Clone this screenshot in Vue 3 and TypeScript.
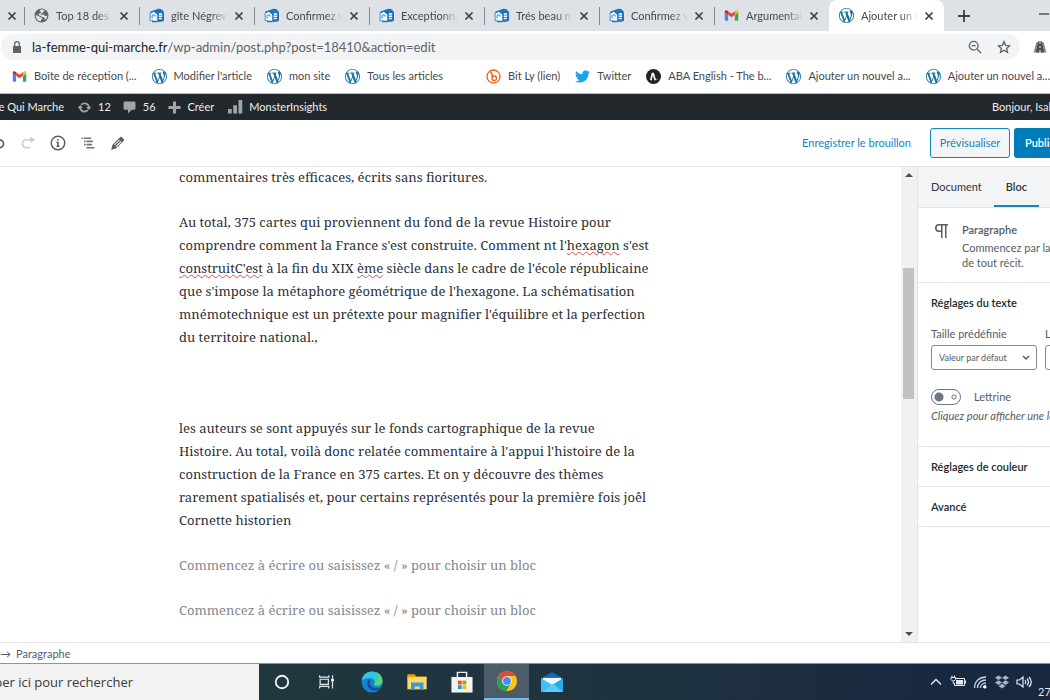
<script setup lang="ts">
import { ref } from 'vue'

interface Tab { icon: string; title: string; active?: boolean }
interface Bookmark { icon: string; label: string; gap?: boolean }

const tabs: Tab[] = [
  { icon: 'globe', title: 'Top 18 des l' },
  { icon: 'gite', title: 'gîte Négrev' },
  { icon: 'gite', title: 'Confirmez v' },
  { icon: 'gite', title: 'Exceptionne' },
  { icon: 'gite', title: 'Trés beau m' },
  { icon: 'gite', title: 'Confirmez v' },
  { icon: 'gmail', title: 'Argumentai' },
  { icon: 'wp', title: 'Ajouter un n', active: true },
]

const bookmarks: Bookmark[] = [
  { icon: 'gmail', label: 'Boîte de réception (...' },
  { icon: 'wp', label: "Modifier l'article" },
  { icon: 'wp', label: 'mon site' },
  { icon: 'wp', label: 'Tous les articles' },
  { icon: 'bitly', label: 'Bit Ly (lien)', gap: true },
  { icon: 'twitter', label: 'Twitter' },
  { icon: 'aba', label: 'ABA English - The b...' },
  { icon: 'wp', label: 'Ajouter un nouvel a...' },
  { icon: 'wp', label: 'Ajouter un nouvel a...' },
]

const apps = [
  { icon: 'cortana', name: 'Cortana' },
  { icon: 'taskview', name: 'Affichage des tâches' },
  { icon: 'edge', name: 'Edge' },
  { icon: 'folder', name: 'Explorateur' },
  { icon: 'store', name: 'Store' },
  { icon: 'chrome', name: 'Chrome' },
  { icon: 'mail', name: 'Courrier' },
]

const urlPath = ref('/wp-admin/post.php?post=18410&action=edit')
const query = ref('')
const dropCap = ref(false)
const fontSize = ref('default')
</script>

<template>
  <div class="screen">
    <svg class="defs" aria-hidden="true">
      <symbol id="wp" viewBox="0 0 20 20">
        <circle cx="10" cy="10" r="9.6" fill="#fff" />
        <path fill="#1673a0" d="M20 10c0-5.51-4.49-10-10-10C4.48 0 0 4.49 0 10c0 5.52 4.48 10 10 10 5.51 0 10-4.48 10-10zM7.78 15.37L4.37 6.22c.55-.02 1.17-.08 1.17-.08.5-.06.44-1.13-.06-1.11 0 0-1.45.11-2.37.11-.18 0-.37 0-.58-.01C4.12 2.69 6.87 1.11 10 1.11c2.33 0 4.45.87 6.05 2.34-.68-.11-1.65.39-1.65 1.58 0 .74.45 1.36.9 2.1.35.61.55 1.36.55 2.46 0 1.49-1.4 5-1.4 5l-3.03-8.37c.54-.02.82-.17.82-.17.5-.05.44-1.25-.06-1.22 0 0-1.44.12-2.38.12-.87 0-2.33-.12-2.33-.12-.5-.03-.56 1.2-.06 1.22l.92.08 1.26 3.41zM17.41 10c.24-.64.74-1.87.43-4.25.7 1.29 1.05 2.71 1.05 4.25 0 3.29-1.73 6.24-4.4 7.78.97-2.59 1.94-5.2 2.92-7.78zM6.1 18.09C3.12 16.65 1.11 13.53 1.11 10c0-1.3.23-2.48.72-3.59C3.25 10.3 4.67 14.2 6.1 18.09zm4.03-6.63l2.58 6.98c-.86.29-1.76.45-2.71.45-.79 0-1.57-.11-2.29-.33.81-2.38 1.62-4.74 2.42-7.1z" />
      </symbol>
      <symbol id="globe" viewBox="0 0 20 20">
        <circle cx="10" cy="10" r="9.3" fill="#5f6368" />
        <path fill="#dee1e6" d="M2.2 9.8c2.6.2 4.4 1 5.6 2.2 1 .9 2.800.4 3.200 1.400.4 1.200-1.200 1.600-1.600 2.800-.2.8-.4 1.400-1.200 1.600C4.800 17 2 13.800 2.200 9.800zM8.500 2.300c2.500-.6 4.500.2 6 1.400-.6.8-1.700.7-2.300 1.300-.5.6.1 1.500-.8 1.900-1 .5-1.900-.1-2.600.6-.6.7.3 1.300 1.300 1.300 1.300 0 2.300-.4 3.300.5.9.8 1.700 1.300 2.900 1.200.6 0 1-.2 1.500-.4-.2 2.400-1.300 4.300-3 5.700-1-.8-.4-2.200-1.200-3-.9-.8-2.300-.5-3.300-1.200-1.100-.7-1.900-1.600-3.100-1.700-.8-.1-1.100-.8-.8-1.500.5-1.500 2.600-1.200 2.900-2.600.2-1-1.100-1.400-2-1.800.4-.9.8-1.400 1.200-1.700z" />
      </symbol>
      <symbol id="gite" viewBox="0 0 20 20">
        <path fill="#f2f8fc" d="M1 8 7 4l5 4v10H2z" />
        <path fill="#1b74bd" d="M2 4.500 12.500 1c4-.2 6.500 1.500 7.500 5V17c-2.500 1.300-6 1.800-9 1.500V9L6.500 5 .5 8z" />
        <path fill="none" stroke="#4c9dd4" stroke-width="1.500" d="M1.500 8v9h4M5 13.500a2.300 2.300 0 1 1 3.500-2" />
        <path stroke="#fff" stroke-width="1.700" d="M13 8h4.500M13 11h4.500M13 14h4" />
        <path stroke="#1b74bd" stroke-width="2" d="M4 18h7" />
      </symbol>
      <symbol id="gmail" viewBox="0 0 20 20">
        <path fill="#4285f4" d="M1 5.500 5.500 9v8H2.500C1.700 17 1 16.300 1 15.500z" />
        <path fill="#34a853" d="M14.500 9 19 5.500v10c0 .8-.7 1.500-1.500 1.500h-3z" />
        <path fill="#c5221f" d="M1 5c0-2 2-2.500 3.500-1.500l1 .8V9L1 5.700z" />
        <path fill="#fbbc04" d="m14.500 4.300 1-.8C17 2.500 19 3 19 5v.7L14.500 9z" />
        <path fill="#ea4335" d="M5.500 4.300 10 7.700l4.500-3.400V9L10 12.400 5.500 9z" />
      </symbol>
      <symbol id="bitly" viewBox="0 0 20 20">
        <circle cx="10" cy="10" r="8.700" fill="#fff" stroke="#ee6123" stroke-width="1.800" />
        <path fill="none" stroke="#ee6123" stroke-width="2" d="M5.500 4.500c2 .3 2.800 1.500 2.800 4v6.200M8.300 10.500c2-2.300 5.700-1.300 5.700 1.800 0 2.700-3 4.200-5.700 2.300" />
      </symbol>
      <symbol id="twitter" viewBox="0 0 24 24">
        <path fill="#1da1f2" d="M23.953 4.57a10 10 0 01-2.825.775 4.958 4.958 0 002.163-2.723c-.951.555-2.005.959-3.127 1.184a4.92 4.92 0 00-8.384 4.482C7.69 8.095 4.067 6.13 1.64 3.162a4.822 4.822 0 00-.666 2.475c0 1.71.87 3.213 2.188 4.096a4.904 4.904 0 01-2.228-.616v.06a4.923 4.923 0 003.946 4.827 4.996 4.996 0 01-2.212.085 4.936 4.936 0 004.604 3.417 9.867 9.867 0 01-6.102 2.105c-.39 0-.779-.023-1.17-.067a13.995 13.995 0 007.557 2.209c9.053 0 13.998-7.496 13.998-13.985 0-.21 0-.42-.015-.63A9.935 9.935 0 0024 4.59z" />
      </symbol>
      <symbol id="aba" viewBox="0 0 20 20">
        <circle cx="10" cy="10" r="10" fill="#1c2529" />
        <path fill="none" stroke="#fff" stroke-width="2.200" d="M6.500 15 8.500 6h1.200l2.600 9" />
        <circle cx="14.800" cy="14" r="1.100" fill="#2bb5c9" />
      </symbol>
      <symbol id="close" viewBox="0 0 10 10">
        <path stroke="#3c4043" stroke-width="1.700" d="m1.500 1.500 7 7m0-7-7 7" />
      </symbol>
      <symbol id="cortana" viewBox="0 0 24 24">
        <circle cx="12" cy="12" r="6.800" fill="none" stroke="#f1f4f5" stroke-width="2" />
      </symbol>
      <symbol id="taskview" viewBox="0 0 24 24">
        <path fill="none" stroke="#e4e9ea" stroke-width="1.300" d="M4 4.500v2.200h10V4.500M4.500 9h9v5.500h-9zM4 19v-2.300h10V19M18 4.500v4M18 12v7" />
        <path fill="#fff" d="M16.500 8.500h3v3h-3z" />
      </symbol>
      <symbol id="edge" viewBox="0 0 24 24">
        <circle cx="12" cy="12" r="11.500" fill="#1382cf" />
        <path fill="#36c3e0" d="M.8 10C2 4 6.500.5 12 .5c6.500 0 11.400 4.500 11.400 10.300 0 3.200-2.900 5.200-5.900 5.200-2 0-3.300-.7-3.300-1.600 0-.8 1-1 1-2.500C15.200 9.500 12 7.800 9 7.800c-4 0-7 1.400-8.200 2.200z" />
        <path fill="#5bd46c" d="M16 1.200c4.500 1.500 7.400 5.200 7.400 9.600 0 3.200-2.900 5.200-5.900 5.200-2 0-3.300-.7-3.300-1.600 0-.8 1-1 1-2.500 5-1.900 5.100-6.900.8-10.700z" />
        <path fill="#164c94" d="M8.500 9.500c-3 3-1.500 9.500 4 11.500 3.500 1 7-.5 8.700-3-5 2-11.700.3-11.700-5.500 0-1.200.4-2.200 1.200-3z" />
      </symbol>
      <symbol id="folder" viewBox="0 0 24 24">
        <path fill="#e5a00d" d="M1.500 3.500h8L11 6h11.500v3h-21z" />
        <path fill="#fdd663" d="M1.500 6.500h21V20h-21z" />
        <path fill="#3d97dc" d="M5.500 20.500v-8h13.500v8h-4V17h-5.500v3.500z" />
      </symbol>
      <symbol id="store" viewBox="0 0 24 24">
        <path fill="none" stroke="#eee" stroke-width="1.600" d="M7 7V1.500h10V7" />
        <path fill="#f3f3f3" d="M.5 6.500h23v17H.5z" />
        <path fill="#f25022" d="M7.500 10.500h4.200v4.200H7.500z" /><path fill="#7fba00" d="M12.500 10.500h4.200v4.200h-4.200z" />
        <path fill="#00a4ef" d="M7.500 15.500h4.200v4.200H7.500z" /><path fill="#ffb900" d="M12.500 15.500h4.200v4.200h-4.200z" />
      </symbol>
      <symbol id="chrome" viewBox="0 0 24 24">
        <circle cx="12" cy="12" r="11" fill="#fbc116" />
        <path fill="#dd4b3e" d="M2.500 6.500A11 11 0 0 1 21.500 6.600H12L7.400 14.700z" />
        <path fill="#1da462" d="M2.500 6.500 7.500 14.600 12 17.200l3.500-1.500L11.200 23A11 11 0 0 1 2.500 6.500z" />
        <circle cx="12" cy="12" r="5.300" fill="#f7f9fa" /><circle cx="12" cy="12" r="4.300" fill="#4c8bf5" />
      </symbol>
      <symbol id="mail" viewBox="0 0 24 24">
        <path fill="#1167b4" d="M0 8 12 1l12 7v3H0z" />
        <path fill="#f4f8fb" d="M2 7.500h20v9H2z" />
        <path fill="#42c0f3" d="M0 8 12 15 0 23z" /><path fill="#29a9e8" d="M24 8v15H0z" />
        <path fill="#56cdf8" d="M0 23 13 14l11 9z" />
      </symbol>
    </svg>

    <nav class="tabstrip" aria-label="Onglets">
      <div class="tab stub"><button class="x" aria-label="Fermer"><svg><use href="#close" /></svg></button></div>
      <div v-for="(tab, i) in tabs" :key="i" class="tab" :class="{ active: tab.active }">
        <svg class="fav"><use :href="'#' + tab.icon" /></svg>
        <span class="title">{{ tab.title }}</span>
        <button class="x" aria-label="Fermer"><svg><use href="#close" /></svg></button>
      </div>
      <button class="newtab" aria-label="Nouvel onglet"><svg viewBox="0 0 12 12"><path stroke="#3c4043" stroke-width="1.800" d="M6 0v12M0 6h12" /></svg></button>
      <button class="minimize" aria-label="Réduire"><svg viewBox="0 0 10 10"><path stroke="#333" stroke-width="1.200" d="M0 5h10" /></svg></button>
    </nav>

    <div class="toolbar">
      <label class="omnibox">
        <svg class="lock" viewBox="0 0 10 12"><path fill="#5f6368" d="M1 5h8v7H1z" /><path fill="none" stroke="#5f6368" stroke-width="1.300" d="M2.700 5V3a2.300 2.300 0 0 1 4.600 0v2" /></svg>
        <span class="host">la-femme-qui-marche.fr</span>
        <input v-model="urlPath" class="path" type="text" aria-label="Adresse" spellcheck="false" />
        <svg class="tool" viewBox="0 0 14 14"><g fill="none" stroke="#5f6368" stroke-width="1.300"><circle cx="5.700" cy="5.700" r="4.400" /><path d="m9 9 4 4M3.700 5.700h4" /></g></svg>
        <svg class="tool star" viewBox="0 0 14 14"><path fill="none" stroke="#5f6368" stroke-width="1.300" d="m7 1.600 1.600 3.700 4 .4-3 2.700.9 4L7 10.300l-3.500 2.100.9-4-3-2.700 4-.4z" /></svg>
      </label>
      <svg class="road" viewBox="0 0 14 12"><path fill="#8a8d90" d="M3.500 1h2v10.500H.5zM10.500 1h-2v10.500h5z" /><path fill="#4d5053" d="M5 .5h4l2 11H3z" /><path stroke="#e4e4e4" d="M7 1v2M7 5v2M7 9v2.500" /></svg>
    </div>

    <nav class="bookmarks" aria-label="Favoris">
      <a v-for="(b, i) in bookmarks" :key="i" href="#" :class="{ gap: b.gap }">
        <svg><use :href="'#' + b.icon" /></svg><span>{{ b.label }}</span>
      </a>
    </nav>

    <nav class="adminbar" aria-label="Administration">
      <a href="#" class="site">La Femme Qui Marche</a>
      <a href="#" class="count"><svg viewBox="0 0 20 20"><path d="M10.200 3.280c3.530 0 6.430 2.610 6.920 6h2.080l-3.500 4-3.500-4h2.320c-.45-1.970-2.210-3.450-4.320-3.450-1.450 0-2.730.71-3.540 1.780L4.950 5.660C6.230 4.200 8.110 3.280 10.200 3.280zm-.4 13.440c-3.520 0-6.430-2.610-6.920-6H.8l3.500-4c1.170 1.330 2.330 2.670 3.500 4H5.480c.45 1.970 2.210 3.450 4.320 3.450 1.450 0 2.730-.71 3.540-1.780l1.710 1.950c-1.280 1.460-3.150 2.380-5.250 2.380z" /></svg>12</a>
      <a href="#" class="comments"><svg viewBox="0 0 20 20"><path d="M4 2h12c1 0 2 .9 2 2v7c0 1.100-1 2-2 2h-3l-5 5v-5H4c-1.100 0-2-.9-2-2V4c0-1.100.9-2 2-2z" /></svg>56</a>
      <a href="#" class="create"><svg viewBox="0 0 20 20"><path d="M8 2h4v6h6v4h-6v6H8v-6H2V8h6z" /></svg>Créer</a>
      <a href="#" class="insights"><svg viewBox="0 0 20 20"><path d="M0 12h5v6H0zM7 7h5v11H7zM14 0h5v18h-5z" /></svg>MonsterInsights</a>
      <a href="#" class="hello">Bonjour, Isabelle</a>
    </nav>

    <header class="edithead">
      <button class="tb undo" aria-label="Annuler"><svg viewBox="0 0 20 20"><path fill="#555d66" d="M12 5H7V2L1 6l6 4V7h5c2.200 0 4 1.800 4 4s-1.800 4-4 4H7v2h5c3.300 0 6-2.700 6-6s-2.700-6-6-6z" /></svg></button>
      <button class="tb" aria-label="Rétablir"><svg viewBox="0 0 20 20"><path fill="#c9ccd0" d="M8 5h5V2l6 4-6 4V7H8c-2.200 0-4 1.800-4 4s1.800 4 4 4h5v2H8c-3.300 0-6-2.700-6-6s2.700-6 6-6z" /></svg></button>
      <button class="tb" aria-label="Informations"><svg viewBox="0 0 20 20"><circle cx="10" cy="10" r="8.500" fill="none" stroke="#555d66" stroke-width="1.800" /><path fill="#555d66" d="M9 5h2v2H9zM8 8.500h3v5h1V15H8v-1.500h1V10H8z" /></svg></button>
      <button class="tb" aria-label="Navigation"><svg viewBox="0 0 20 20"><path fill="#6c737b" d="M2 3h2v2H2zM5 3h9v2H5zM5 7h2v2H5zM8 7h8v2H8zM5 11h2v2H5zM8 11h7v2H8zM8 15h10v2H8z" /></svg></button>
      <button class="tb" aria-label="Modifier"><svg viewBox="0 0 20 20"><path fill="#555d66" d="M14.500 2.500 17.500 5.500c.5.5.5 1 0 1.500L7.500 17 1.500 18.500 3 12.500 13 2.500c.5-.5 1-.5 1.500 0zM11.500 5.800 5.200 12.100l.8.800 6.400-6.300zM8 14.900l6.300-6.400-.9-.9L7.100 14z" /></svg></button>
      <button class="draft">Enregistrer le brouillon</button>
      <button class="preview">Prévisualiser</button>
      <button class="publish">Publier</button>
    </header>

    <div class="work">
      <main class="canvas">
        <p>commentaires très efficaces, écrits sans fioritures.</p>
        <p>
          Au total, 375 cartes qui proviennent du fond de la revue Histoire pour<br />
          comprendre comment la France s'est construite. Comment nt l'<u>hexagon</u> s'est<br />
          <u>construitC'est</u> à la fin du XIX <u>ème</u> siècle dans le cadre de l'école républicaine<br />
          que s'impose la métaphore géométrique de l'hexagone. La schématisation<br />
          mnémotechnique est un prétexte pour magnifier l'équilibre et la perfection<br />
          du territoire national.,
        </p>
        <p class="blank"></p>
        <p>
          les auteurs se sont appuyés sur le fonds cartographique de la revue<br />
          Histoire. Au total, voilà donc relatée commentaire à l'appui l'histoire de la<br />
          construction de la France en 375 cartes. Et on y découvre des thèmes<br />
          rarement spatialisés et, pour certains représentés pour la première fois joêl<br />
          Cornette historien
        </p>
        <p class="hint">Commencez à écrire ou saisissez « / » pour choisir un bloc</p>
        <p class="hint">Commencez à écrire ou saisissez « / » pour choisir un bloc</p>
      </main>

      <div class="scroll" aria-hidden="true">
        <svg viewBox="0 0 8 4"><path fill="#505050" d="M0 4 4 0l4 4z" /></svg>
        <div class="track"><i class="before"></i><i class="thumb"></i><i class="after"></i></div>
        <svg viewBox="0 0 8 4"><path fill="#505050" d="m0 0 4 4 4-4z" /></svg>
      </div>

      <aside class="side">
        <div class="sidetabs"><button>Document</button><button class="on">Bloc</button></div>
        <section class="card">
          <svg viewBox="0 0 14 16"><path fill="#555d66" d="M5 1h9v1.600h-1.500V15H11V2.600H8.500V15H7V9H5A4 4 0 0 1 5 1zM5 2.600a2.400 2.400 0 0 0 0 4.800h2V2.600z" /></svg>
          <div><h2>Paragraphe</h2><p>Commencez par la base<br />de tout récit.</p></div>
        </section>
        <section class="text">
          <h3>Réglages du texte</h3>
          <div class="fields">
            <div class="field">
              <label for="preset">Taille prédéfinie</label>
              <span class="pick">
                <select id="preset" v-model="fontSize"><option value="default">Valeur par défaut</option></select>
                <svg viewBox="0 0 8 6"><path fill="none" stroke="#555d66" stroke-width="1.500" d="m1 1 3 3 3-3" /></svg>
              </span>
            </div>
            <div class="field">
              <label for="custom">La taille</label>
              <input id="custom" type="text" />
            </div>
          </div>
          <div class="toggle">
            <input id="cap" v-model="dropCap" type="checkbox" />
            <label for="cap">Lettrine</label>
          </div>
          <p class="help">Cliquez pour afficher une lettrine</p>
        </section>
        <button class="panel">Réglages de couleur</button>
        <button class="panel">Avancé</button>
      </aside>
    </div>

    <footer class="crumbs"><span class="arrow">→</span><button>Paragraphe</button></footer>

    <div class="taskbar">
      <div class="find"><input v-model="query" type="text" placeholder="Taper ici pour rechercher" aria-label="Rechercher" /></div>
      <button v-for="a in apps" :key="a.icon" class="app" :class="{ open: a.icon === 'chrome' }" :aria-label="a.name"><svg><use :href="'#' + a.icon" /></svg></button>
      <div class="tray">
        <svg viewBox="0 0 16 16"><path fill="none" stroke="#e6eaf0" stroke-width="1.400" d="m3 10.500 5-5 5 5" /></svg>
        <svg viewBox="0 0 16 16"><path fill="none" stroke="#e6eaf0" d="M6 4.500h8.500v7H4.500v-2M2 1.500v2M4.500 1.500v2M1 3.500h4.500v2L4 7H2.500L1 5.500zM3.300 7v2.500H5" /><path fill="#e6eaf0" d="M6 6h7v4.500H6zM14.500 6.500H16v3h-1.500z" /></svg>
        <svg viewBox="0 0 16 16"><path fill="none" stroke="#ccd3dc" stroke-width="1.300" d="M2.500 14C2.500 7.500 7.500 3 14 3M5.500 14C5.500 9.500 9 6 14 6M8.500 14c0-3 2.500-5 5.500-5M11.500 14c0-1.500 1-2.500 2.500-2.500" /><circle cx="13" cy="13" r="1.500" fill="#fff" /></svg>
        <svg viewBox="0 0 16 16"><path fill="#a9b3c1" d="m4.500 1.500 3.500 2.300-3.500 2.300L1 3.800zm7 0L15 3.800l-3.500 2.300L8 3.800zm-7 4.800L8 8.600l-3.500 2.300L1 8.600zm7 0L15 8.600l-3.500 2.300L8 8.600zM8 9.800l3.500 2.300L8 14.400l-3.500-2.300z" /></svg>
        <svg viewBox="0 0 16 16"><path fill="none" stroke="#e6eaf0" stroke-width="1.200" d="M1 6h2.500L7 3v10l-3.500-3H1zM9 6q1.500 2 0 4M11 4.500q3 3.500 0 7M13 3q4.500 5 0 10" /></svg>
        <span class="date">27/11</span>
      </div>
    </div>
  </div>
</template>

<style>
body { margin: 0; overflow: hidden; }
#app { height: 100vh; }
</style>

<style scoped>
.screen { height: 100%; display: flex; flex-direction: column; overflow: hidden; background: #fff; color: #32373c; font: 11px/16px Lato, "Open Sans", sans-serif; white-space: nowrap; }
.defs { display: none; }
button, input, select { font: inherit; color: inherit; border: 0; padding: 0; margin: 0; background: none; min-width: 0; border-radius: 0; }
a { color: inherit; text-decoration: none; }
svg { display: block; flex: none; }
p, h2, h3 { margin: 0; font-weight: 400; font-size: inherit; }

.tabstrip { flex: none; height: 31px; display: flex; background: #dee1e6; color: #45494d; }
.tab { flex: none; width: 115px; box-sizing: border-box; display: flex; align-items: center; padding: 0 10px 0 9px; border-left: 1px solid transparent; background: linear-gradient(#85898e, #85898e) 0 7px / 1px 18px no-repeat; background-origin: border-box; }
.tab.stub { width: 24px; background: none; padding: 0 9px 0 0; justify-content: flex-end; }
.tab.active { background: #fff; border-radius: 8px 8px 0 0; }
.fav { width: 15px; height: 15px; margin-right: 7px; }
.title { flex: 1; overflow: hidden; mask-image: linear-gradient(90deg, #000 70%, transparent); }
.x { margin-left: 6px; width: 10px; height: 10px; }
.x svg { width: 10px; height: 10px; }
.newtab { margin-left: 14px; }
.newtab svg { width: 12px; height: 12px; }
.minimize { margin-left: auto; margin-bottom: 4px; }
.minimize svg { width: 12px; height: 10px; }

.toolbar { flex: none; height: 32px; display: flex; align-items: center; padding-left: 1px; }
.omnibox { flex: 1; height: 26px; display: flex; align-items: center; background: #f1f3f4; border-radius: 13px; padding: 0 9px 0 11px; font-size: 13px; }
.lock { width: 10px; height: 12px; margin-right: 10px; }
.host { color: #202124; }
.path { flex: 1; color: #5f6368; outline: 0; }
.tool { width: 14px; height: 14px; }
.star { margin-left: 15px; }
.road { width: 14px; height: 12px; margin: 0 3px 0 13px; }

.bookmarks { flex: none; height: 31px; box-sizing: border-box; display: flex; align-items: center; padding: 0 0 4px 12px; border-bottom: 1px solid #b9bbbd; color: #45494d; gap: 15px; overflow: hidden; }
.bookmarks a { display: flex; align-items: center; gap: 7px; }
.bookmarks .gap { margin-left: 28px; }
.bookmarks svg { width: 15px; height: 15px; }

.adminbar { flex: none; height: 26px; box-sizing: border-box; display: flex; align-items: center; background: #23282d; color: #eee; }
.adminbar a { display: flex; align-items: center; gap: 6px; }
.adminbar svg { width: 15px; height: 15px; fill: #a0a5aa; }
.adminbar .site { width: 64px; justify-content: flex-end; margin-right: 13px; }
.count { margin-right: 11px; }
.comments { margin-right: 11px; }
.create { margin-right: 14px; }
.adminbar .hello { margin-left: auto; width: 58px; overflow: hidden; }

.edithead { flex: none; height: 47px; box-sizing: border-box; display: flex; align-items: center; border-bottom: 1px solid #e2e4e7; overflow: hidden; }
.tb { flex: none; width: 30px; display: flex; justify-content: center; }
.tb svg { width: 16px; height: 16px; }
.undo { margin-left: -17px; }
.draft { margin-left: auto; color: #1485bd; padding: 0 19px; }
.preview { flex: none; width: 80px; height: 30px; border: 1px solid #1485bd; border-radius: 3px; background: #f3f5f6; color: #1485bd; }
.publish { flex: none; width: 36px; height: 30px; margin-left: 4px; padding-left: 11px; background: #007cba; color: #fff; border-radius: 3px 0 0 3px; text-align: left; overflow: hidden; font-weight: 600; }

.work { flex: 1; min-height: 0; display: flex; overflow: hidden; }
.canvas { flex: 1; min-width: 0; overflow: hidden; padding-left: 179px; font: 13px/23px "Noto Serif", "DejaVu Serif", serif; color: #2b3036; }
.canvas p { margin-bottom: 22px; }
.canvas p:first-child { margin-top: -1px; }
.canvas .blank { height: 24px; }
.canvas .hint { color: #83878b; }
.canvas u { text-decoration: underline wavy #e8474c 1px; text-underline-offset: 1px; text-decoration-skip-ink: none; }

.scroll { flex: none; width: 16px; box-sizing: border-box; display: flex; flex-direction: column; align-items: center; background: #f1f1f1; padding: 6px 1px 6px 0; }
.scroll svg { width: 8px; height: 4px; }
.track { flex: 1; display: flex; flex-direction: column; width: 11px; }
.before { flex: 91; }
.thumb { flex: 131; background: #c1c1c1; }
.after { flex: 233; }

.side { flex: none; width: 133px; box-sizing: border-box; overflow: hidden; border-left: 1px solid #e2e4e7; color: #555d66; }
.sidetabs { height: 41px; box-sizing: border-box; display: flex; background: #f3f4f5; border-bottom: 1px solid #e2e4e7; color: #32373c; }
.sidetabs button { padding: 0 12px 0 13px; }
.sidetabs .on { font-weight: 600; border-bottom: 2px solid #1485bd; padding: 2px 12px 0; }
.card { display: flex; gap: 14px; padding: 14px 0 12px 16px; border-bottom: 1px solid #e2e4e7; line-height: 15px; }
.card svg { width: 14px; height: 16px; margin-top: 1px; }
.card h2 { font-weight: 600; margin-bottom: 3px; }
.text { padding: 12px 0 22px 13px; border-bottom: 1px solid #e2e4e7; }
.text h3 { color: #23282d; font-weight: 600; margin-bottom: 15px; }
.fields { display: flex; gap: 8px; }
.field { flex: none; display: flex; flex-direction: column; gap: 3px; }
.pick { display: flex; align-items: center; width: 106px; height: 25px; box-sizing: border-box; border: 1px solid #7e8993; border-radius: 3px; padding: 0 6px 0 7px; font-size: 9px; }
.pick select { flex: 1; appearance: none; outline: 0; }
.pick svg { width: 8px; height: 6px; }
.field input { width: 60px; height: 25px; box-sizing: border-box; border: 1px solid #7e8993; border-radius: 3px; }
.toggle { display: flex; align-items: center; gap: 13px; margin-top: 19px; }
.toggle input { appearance: none; width: 30px; height: 16px; box-sizing: border-box; border: 1px solid #6c7781; border-radius: 8px; background: radial-gradient(circle at 7px 7px, #6c7781 4px, transparent 5px), radial-gradient(circle at 22px 7px, transparent 1px, #6c7781 2px, transparent 3px); }
.help { font-style: italic; margin-top: 3px; }
.panel { display: block; width: 100%; height: 40px; box-sizing: border-box; padding-left: 13px; text-align: left; font-weight: 600; color: #23282d; border-bottom: 1px solid #e2e4e7; }

.crumbs { flex: none; height: 21px; box-sizing: border-box; border-top: 1px solid #e2e4e7; display: flex; align-items: center; gap: 5px; color: #555d66; padding-top: 2px; }

.taskbar { flex: none; height: 37px; box-sizing: border-box; display: flex; border-top: 1px solid #8c9699; background: linear-gradient(90deg, #20373f 25%, #1f333f 60%, #192841 90%); overflow: hidden; }
.find { flex: none; width: 259px; display: flex; justify-content: flex-end; background: #f2f2f2; color: #3a3a3a; font: 13px/18px "Open Sans", sans-serif; }
.find input { flex: none; width: 300px; padding-right: 126px; box-sizing: border-box; text-align: right; outline: 0; }
.find input::placeholder { color: #3a3a3a; opacity: 1; }
.app { flex: none; width: 45px; display: flex; align-items: center; justify-content: center; }
.app svg { width: 22px; height: 22px; }
.app.open { background: #4c5d67; border-bottom: 2px solid #76b9ed; }
.tray { margin-left: auto; display: flex; align-items: center; gap: 6px; color: #e6eaf0; }
.tray svg { width: 16px; height: 16px; }
.date { width: 12px; overflow: hidden; align-self: flex-end; }
</style>
